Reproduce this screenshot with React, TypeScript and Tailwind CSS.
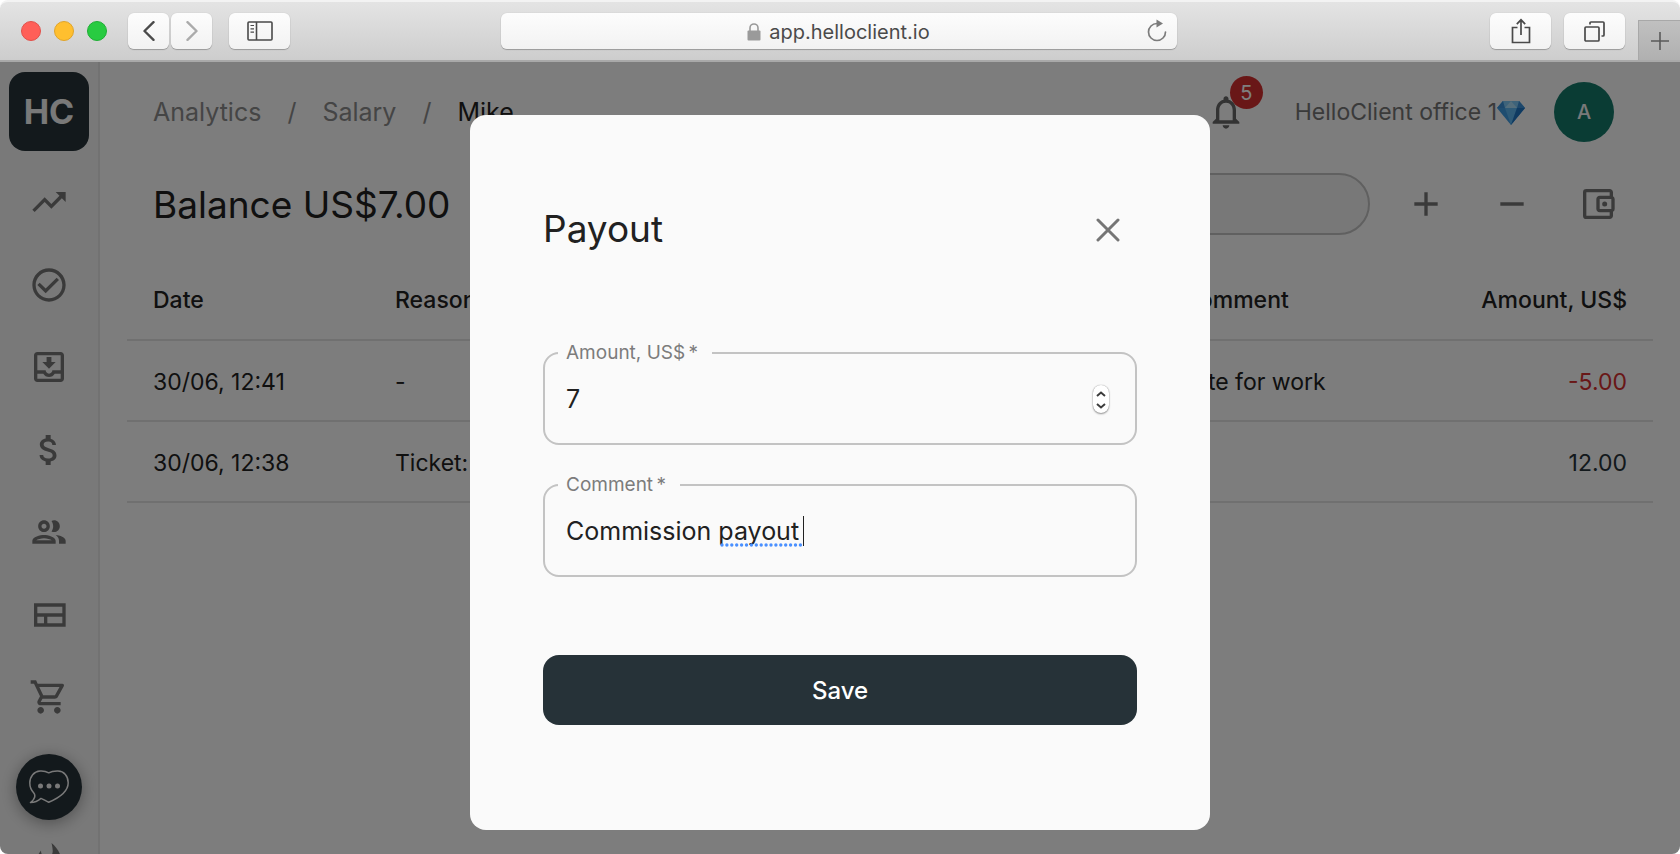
import type { ReactNode } from "react";
import {
  MdAdd,
  MdAttachMoney,
  MdCheckCircleOutline,
  MdNotificationsNone,
  MdOutlineAccountBalanceWallet,
  MdOutlineGroup,
  MdOutlineShoppingCart,
  MdRemove,
  MdTrendingUp,
  MdWhatshot,
  MdMailOutline,
} from "react-icons/md";

const toolbarButton =
  "flex h-9 items-center justify-center rounded-md bg-linear-to-b from-[#fdfdfd] to-[#f2f2f2] text-[#4a4a4a] shadow-[0_1px_1px_rgba(0,0,0,0.25),0_0_1px_rgba(0,0,0,0.2)]";

function BrowserBar() {
  return (
    <header className="flex h-[62px] shrink-0 items-center rounded-t-lg border-t-2 border-b-2 border-t-[#f3f3f3] border-b-[#a9a9a9] bg-linear-to-b from-[#e4e4e4] to-[#cdcdcd] pl-[21px]">
      <div className="flex flex-1 items-center">
        <div className="flex gap-[13px]">
          <span className="size-5 rounded-full border border-[#e2504a] bg-[#ff5f58]" />
          <span className="size-5 rounded-full border border-[#e0a42a] bg-[#ffbf2f]" />
          <span className="size-5 rounded-full border border-[#1fae35] bg-[#28cb41]" />
        </div>
        <div className="ml-[21px] flex gap-0.5">
          <button aria-label="Back" className={`${toolbarButton} w-[41px]`}>
            <svg viewBox="0 0 12 20" className="h-5 w-3" fill="none" stroke="currentColor" strokeWidth="2.4" strokeLinecap="round" strokeLinejoin="round">
              <path d="M10.5 1.2 1.5 10l9 8.800" />
            </svg>
          </button>
          <button aria-label="Forward" className={`${toolbarButton} w-[41px]`}>
            <svg viewBox="0 0 12 20" className="h-5 w-3 text-[#ababab]" fill="none" stroke="currentColor" strokeWidth="2.4" strokeLinecap="round" strokeLinejoin="round">
              <path d="m1.500 1.200 9 8.800-9 8.800" />
            </svg>
          </button>
        </div>
        <button aria-label="Show sidebar" className={`${toolbarButton} ml-[17px] w-[61px]`}>
          <svg viewBox="0 0 26 20" className="h-5 w-[26px]" fill="none" stroke="currentColor" strokeWidth="1.600">
            <rect x="1" y="1" width="24" height="18" rx="1" />
            <path d="M9.500 1v18" />
            <path d="M3.500 4.500h3.500M3.500 7.800h3.500M3.500 11.100h3.500" strokeWidth="1.200" />
          </svg>
        </button>
      </div>

      <div className={`${toolbarButton} relative mr-6 w-[676px]`}>
        <a href="#address" className="flex items-center gap-2 pt-0.5 text-[20px] leading-6 text-[#4a4a4a]">
          <svg viewBox="0 0 14 18" className="h-[18px] w-3.5 text-[#9a9a9a]">
            <path d="M3 8V5a4 4 0 0 1 8 0v3" fill="none" stroke="currentColor" strokeWidth="1.600" />
            <rect x="0.500" y="7.500" width="13" height="10" rx="1" fill="currentColor" />
          </svg>
          app.helloclient.io
        </a>
        <button aria-label="Reload" className="absolute right-2 flex size-6 items-center justify-center text-[#7c7c7c]">
          <svg viewBox="0 0 20 24" className="h-6 w-5" fill="none" stroke="currentColor" strokeWidth="1.700" strokeLinecap="round">
            <path d="M10 4.500a8.500 8.500 0 1 0 8.500 8.500" />
            <path d="M9.500.500v8l6.500-4z" fill="currentColor" stroke="none" />
          </svg>
        </button>
      </div>

      <div className="flex flex-1 items-center justify-end self-stretch">
        <button aria-label="Share" className={`${toolbarButton} w-[61px]`}>
          <svg viewBox="0 0 20 26" className="h-[26px] w-5" fill="none" stroke="currentColor" strokeWidth="1.700">
            <path d="M6.500 9.500H1.500v15h17v-15h-5M10 17V1.800M5.800 6.200 10 1.800l4.200 4.400" />
          </svg>
        </button>
        <button aria-label="Show all tabs" className={`${toolbarButton} ml-[13px] w-[61px]`}>
          <svg viewBox="0 0 21 21" className="size-[21px]" fill="none" stroke="currentColor" strokeWidth="1.700">
            <rect x="1" y="6" width="14" height="14" rx="1" />
            <path d="M6 3.500V2a1 1 0 0 1 1-1h12a1 1 0 0 1 1 1v12a1 1 0 0 1-1 1h-1.500" />
          </svg>
        </button>
        <button aria-label="New tab" className="mt-[18px] ml-[13px] flex w-[42px] items-center justify-center self-stretch border-t border-l border-[#a8a8a8] bg-linear-to-b from-[#c0c0c0] to-[#b0b0b0] text-[#5a5a5a]">
          <svg viewBox="0 0 18 18" className="size-[18px]" stroke="currentColor" strokeWidth="1.600">
            <path d="M9 0v18M0 9h18" />
          </svg>
        </button>
      </div>
    </header>
  );
}

function InboxIcon() {
  return (
    <svg viewBox="0 0 24 24" className="size-10" fill="currentColor">
      <path d="M16 9h-2.550V6h-2.900v3H8l4 4zM19 3H4.990C3.880 3 3 3.900 3 5v14c0 1.100.880 2 1.990 2H19c1.100 0 2-.900 2-2V5c0-1.100-.900-2-2-2m0 16H5v-3h3.560c.690 1.190 1.970 2 3.450 2s2.750-.810 3.450-2H19zm0-5h-4.990c0 1.100-.900 2-2 2s-2-.900-2-2H5V5h14z" />
    </svg>
  );
}

function LayoutIcon() {
  return (
    <svg viewBox="0 0 24 24" className="size-10" fill="none" stroke="currentColor" strokeWidth="2">
      <path d="M4 6h17v12H4zM4 12h17M10 12v6" />
    </svg>
  );
}

const navItems: { label: string; icon: ReactNode }[] = [
  { label: "Analytics", icon: <MdTrendingUp className="size-10" /> },
  { label: "Tasks", icon: <MdCheckCircleOutline className="size-10" /> },
  { label: "Inbox", icon: <InboxIcon /> },
  { label: "Finance", icon: <MdAttachMoney className="size-10" /> },
  { label: "Clients", icon: <MdOutlineGroup className="size-10" /> },
  { label: "Pages", icon: <LayoutIcon /> },
  { label: "Shop", icon: <MdOutlineShoppingCart className="size-10" /> },
  { label: "Messages", icon: <MdMailOutline className="size-10" /> },
  { label: "Trends", icon: <MdWhatshot className="size-10" /> },
];

function Sidebar() {
  return (
    <aside className="relative flex w-[100px] shrink-0 flex-col items-center overflow-hidden border-r-2 border-[#e4e4e4] bg-[#f3f3f3] pt-2.5">
      <a href="#home" className="flex h-[79px] w-20 shrink-0 items-center justify-center rounded-2xl bg-[#263238] text-[34px] font-bold text-[#f3f3f3]">
        HC
      </a>
      <nav className="mt-[31px] flex h-[700px] shrink-0 flex-col justify-between text-[#757575]">
        {navItems.map((item) => (
          <a key={item.label} href="#nav" aria-label={item.label} className="size-10">
            {item.icon}
          </a>
        ))}
      </nav>
      <button aria-label="Open chat" className="absolute bottom-[34px] left-4 flex size-[66px] items-center justify-center rounded-full bg-[#263238] text-[#f3f3f3] shadow-[0_3px_16px_rgba(0,0,0,0.35)]">
        <svg viewBox="0 0 40 34" className="h-[34px] w-10" fill="none" stroke="currentColor" strokeWidth="1.500" strokeLinejoin="round">
          <path d="M19.700 2.800C17 1.200 14 .800 11 1 5 1.400.800 6.500.800 13c0 5 1.700 7.500 4 10 1.800 2.200 1.500 6-3.300 9.600 4.200-.200 7.500-1.600 10.500-4.200 2.500 1 4.800 2.600 7.700 3.800 9-3.800 19.500-10.500 19.500-19.500C39.200 6 35 1.200 29 1c-3.500-.100-6.500.200-9.300 1.800z" />
          <circle cx="11.500" cy="16" r="2.500" fill="currentColor" stroke="none" />
          <circle cx="20" cy="16" r="2.500" fill="currentColor" stroke="none" />
          <circle cx="28.500" cy="16" r="2.500" fill="currentColor" stroke="none" />
        </svg>
      </button>
    </aside>
  );
}

function Diamond() {
  return (
    <svg viewBox="0 0 28 25" className="h-[25px] w-7">
      <path d="M6 1h16l6 7-14 17L0 8z" fill="#3f9be0" />
      <path d="M6 1h16l6 7H0z" fill="#7cc6f4" />
      <path d="M6 1 8 8H0zM22 1l-2 7h8z" fill="#3a8fd6" />
      <path d="m14 1 6 7H8z" fill="#a9dcf8" />
      <path d="M8 8h12l-6 17z" fill="#5db4ee" />
      <path d="M20 8h8L14 25z" fill="#1f74c2" />
    </svg>
  );
}

function TopBar() {
  return (
    <div className="flex h-[100px] items-center justify-between pr-[39px] pl-[26px]">
      <nav aria-label="Breadcrumb" className="flex gap-[26px] text-[25px] leading-8 text-[#8a8a8a]">
        <a href="#analytics">Analytics</a>
        <span>/</span>
        <a href="#salary">Salary</a>
        <span>/</span>
        <span className="text-[#212121]">Mike</span>
      </nav>
      <div className="flex items-center">
        <button aria-label="Notifications" className="relative size-10 text-[#666666]">
          <MdNotificationsNone className="size-10" />
          <span className="absolute -top-4 left-6 flex size-[33px] items-center justify-center rounded-full bg-[#d32f2f] text-[20px] text-white">
            5
          </span>
        </button>
        <a href="#office" className="ml-[49px] flex items-center text-[23px] leading-8 text-[#757575]">
          HelloClient office 1
          <Diamond />
        </a>
        <button className="ml-[29px] flex size-[60px] items-center justify-center rounded-full bg-[#147869] text-[20px] font-medium text-[#f3f3f3]">
          A
        </button>
      </div>
    </div>
  );
}

function BalanceBar() {
  return (
    <div className="flex items-center justify-between pt-[11px] pr-[35px] pl-[26px]">
      <h1 className="pt-0.5 text-[37px] leading-[60px] text-[#212121]">Balance US$7.00</h1>
      <div className="flex items-center">
        <input type="search" aria-label="Search" className="h-[62px] w-[700px] rounded-full border-2 border-[#c0c0c0] bg-[#f1f1f1] px-8 text-[23px]" />
        <div className="ml-9 flex gap-[46px] text-[#757575]">
          <button aria-label="Add" className="size-10">
            <MdAdd className="size-10" />
          </button>
          <button aria-label="Subtract" className="size-10">
            <MdRemove className="size-10" />
          </button>
          <button aria-label="Payout" className="size-10">
            <MdOutlineAccountBalanceWallet className="size-10" />
          </button>
        </div>
      </div>
    </div>
  );
}

const rows = [
  { date: "30/06, 12:41", reason: "-", comment: "Late for work", amount: "-5.00", tone: "text-[#d32f2f]" },
  { date: "30/06, 12:38", reason: "Ticket:", comment: "", amount: "12.00", tone: "text-[#263238]" },
];

const cell = "px-[26px] pt-0.5";

function SalaryTable() {
  return (
    <table className="mt-6 w-full table-fixed border-collapse text-left text-[23px] leading-8 text-[#212121]">
      <thead>
        <tr className="h-[81px] border-b-2 border-[#e0e0e0]">
          <th className={`${cell} w-[242px] font-medium`}>Date</th>
          <th className={`${cell} font-medium`}>Reason</th>
          <th className={`${cell} w-[252px] font-medium`}>Comment</th>
          <th className={`${cell} w-[245px] text-right font-medium`}>Amount, US$</th>
        </tr>
      </thead>
      <tbody>
        {rows.map((row) => (
          <tr key={row.date} className="h-[81px] border-b-2 border-[#e0e0e0]">
            <td className={cell}>{row.date}</td>
            <td className={cell}>{row.reason}</td>
            <td className={cell}>{row.comment}</td>
            <td className={`${cell} text-right ${row.tone}`}>{row.amount}</td>
          </tr>
        ))}
      </tbody>
    </table>
  );
}

function Field({ id, label, children }: { id: string; label: string; children: ReactNode }) {
  return (
    <fieldset className="h-[102px] min-w-0 rounded-2xl border-2 border-[#c3c3c3] pr-[26px] pl-[13px]">
      <legend className="pr-3.5 pl-2">
        <label htmlFor={id} className="block text-[19px] leading-5 text-[#7c7c7c]">
          {label}&thinsp;*
        </label>
      </legend>
      <div className="relative flex h-[71px] items-center pl-2">{children}</div>
    </fieldset>
  );
}

function PayoutDialog() {
  return (
    <form role="dialog" aria-label="Payout" className="mx-6 flex w-full max-w-[740px] flex-col self-start rounded-2xl bg-[#fafafa] px-[73px] pt-[83px] pb-[105px]">
      <div className="flex items-center justify-between pr-[9px]">
        <h2 className="text-[37px] leading-[61px] text-[#212121]">Payout</h2>
        <button type="button" aria-label="Close" className="flex size-10 items-center justify-center pt-0.5 text-[#757575]">
          <svg viewBox="0 0 24 24" className="size-6" stroke="currentColor" strokeWidth="3" strokeLinecap="round">
            <path d="m2 2 20 20M22 2 2 22" />
          </svg>
        </button>
      </div>

      <div className="mt-[84px] flex flex-col gap-[30px]">
        <Field id="amount" label="Amount, US$">
          <input
            id="amount"
            type="number"
            defaultValue="7"
            className="w-full min-w-0 appearance-none bg-transparent text-[25px] leading-8 text-[#212121] outline-none [-moz-appearance:textfield] [&::-webkit-inner-spin-button]:appearance-none"
          />
          <div className="flex w-4 shrink-0 flex-col overflow-hidden rounded-lg bg-white text-[#3c3c3c] shadow-[0_1px_2px_rgba(0,0,0,0.4),0_0_1px_rgba(0,0,0,0.4)]">
            <button type="button" aria-label="Increase" className="flex h-3.5 items-center justify-center pt-1">
              <svg viewBox="0 0 10 6" className="h-1.5 w-2.5" fill="none" stroke="currentColor" strokeWidth="2">
                <path d="m1 5 4-3.500L9 5" />
              </svg>
            </button>
            <button type="button" aria-label="Decrease" className="flex h-3.5 items-center justify-center">
              <svg viewBox="0 0 10 6" className="h-1.5 w-2.5" fill="none" stroke="currentColor" strokeWidth="2">
                <path d="m1 1 4 3.500L9 1" />
              </svg>
            </button>
          </div>
        </Field>
        <Field id="comment" label="Comment">
          <input
            id="comment"
            type="text"
            defaultValue="Commission payout"
            spellCheck={false}
            className="w-full min-w-0 bg-transparent text-[25px] leading-8 text-[#212121] outline-none"
          />
          <svg aria-hidden="true" className="pointer-events-none absolute bottom-[19px] left-[162px] h-1 w-[83px]">
            <path d="M2 2h80" stroke="#4a90ff" strokeWidth="3.400" strokeLinecap="round" strokeDasharray="0 4.900" />
          </svg>
          <span aria-hidden="true" className="pointer-events-none absolute left-[245px] h-[30px] w-px bg-[#212121]" />
        </Field>
      </div>

      <button type="submit" className="mt-[78px] h-[70px] rounded-2xl bg-[#263238] pt-0.5 text-[24px] leading-8 font-medium text-white">
        Save
      </button>
    </form>
  );
}

export default function App() {
  return (
    <div className="flex h-screen flex-col overflow-hidden bg-white font-[Inter,'Liberation_Sans',sans-serif]">
      <BrowserBar />
      <div className="relative flex min-h-0 flex-1 overflow-hidden rounded-b-lg bg-[#fafafa]">
        <Sidebar />
        <main className="min-w-0 flex-1 px-[27px]">
          <TopBar />
          <BalanceBar />
          <SalaryTable />
        </main>
        <div className="absolute inset-0 flex justify-center overflow-hidden bg-black/50 pt-[53px]">
          <PayoutDialog />
        </div>
      </div>
    </div>
  );
}
